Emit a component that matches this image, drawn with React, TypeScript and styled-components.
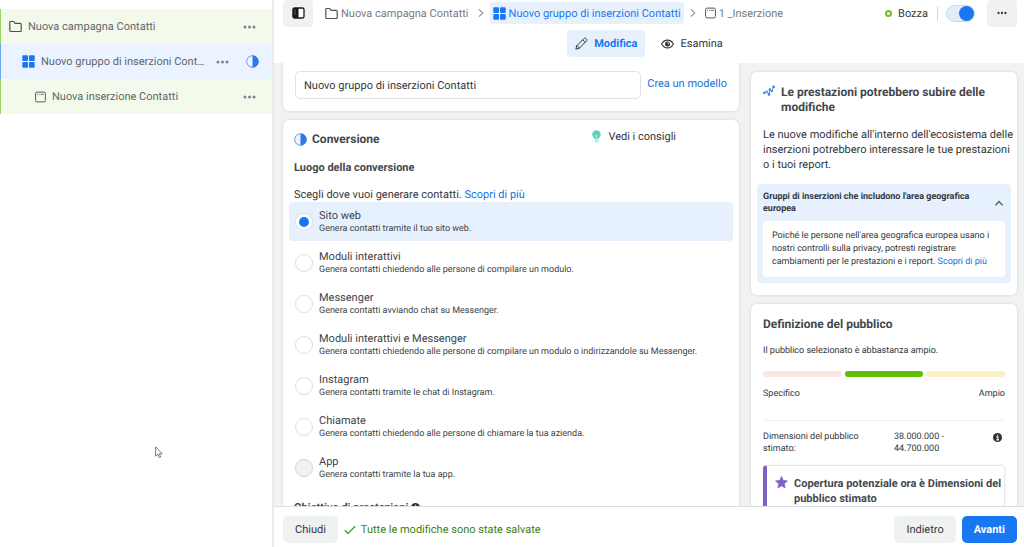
import React from "react";
import styled, { createGlobalStyle } from "styled-components";

const GlobalStyle = createGlobalStyle`
  * { box-sizing: border-box; }
  body {
    margin: 0;
    font-family: Roboto, "Liberation Sans", sans-serif;
    font-size: 11px;
    line-height: 15px;
    color: #33373b;
    background: #fff;
    text-rendering: geometricPrecision;
  }
  h2, h3, p, ul, ol, fieldset, legend, dl, dd { margin: 0; padding: 0; border: 0; list-style: none; }
  button, input { font: inherit; color: inherit; text-rendering: inherit; }
  svg { display: block; flex: none; }
`;

/* ---------- page frame ---------- */

const Page = styled.div`
  display: flex;
  height: 100vh;
  overflow: hidden;
`;

const Sidebar = styled.nav`
  flex: 0 0 274px;
  min-width: 0;
  padding-top: 9px;
  border-right: 2px solid #eaecec;
`;

const Main = styled.div`
  flex: 1;
  min-width: 0;
  display: flex;
  flex-direction: column;
`;

const Scroller = styled.main`
  flex: 1;
  min-height: 0;
  overflow: hidden;
  display: flex;
  align-items: flex-start;
  gap: 12px;
  padding: 0 7px 0 9px;
  background: #f1f3f3;
`;

const FormColumn = styled.div`
  flex: 1;
  min-width: 0;
`;

const InfoColumn = styled.aside`
  flex: 0 0 266px;
  padding-top: 9px;
  display: flex;
  flex-direction: column;
  gap: 9px;
`;

const Card = styled.section`
  background: #fff;
  border-radius: 6px;
  box-shadow: 0 0 3px rgba(0, 0, 0, 0.14);
`;

/* ---------- campaign tree ---------- */

const TreeRow = styled.li<{ $depth: number; $active?: boolean }>`
  display: flex;
  align-items: center;
  gap: 6px;
  height: 35px;
  padding: 0 13px 0 ${(p) => 8 + p.$depth * 13}px;
  border-left: 1px solid ${(p) => (p.$active ? "#6ea6f5" : "#98d65f")};
  background: ${(p) => (p.$active ? "#eaf3ff" : "#f4faeb")};
`;

const TreeLink = styled.a`
  flex: 1;
  min-width: 0;
  overflow: hidden;
  white-space: nowrap;
  text-overflow: ellipsis;
  color: #5f666d;
  text-decoration: none;
`;

const DotsButton = styled.button`
  display: flex;
  padding: 4px 3px;
  border: 0;
  background: none;
  color: #7d848b;
`;

const StatusSlot = styled.span`
  margin-left: 8px;
`;

/* ---------- header ---------- */

const Header = styled.header`
  height: 63px;
  background: #fff;
`;

const CrumbBar = styled.div`
  display: flex;
  align-items: center;
  height: 26px;
  padding: 0 7px 0 9px;
`;

const IconButton = styled.button`
  display: flex;
  align-items: center;
  justify-content: center;
  width: 30px;
  height: 27px;
  padding: 0;
  border: 0;
  border-radius: 4px;
  background: #f0f1f1;
  color: #33373b;
`;

const Crumbs = styled.ol`
  flex: 1;
  display: flex;
  align-items: center;
  gap: 5px;
  margin-left: 9px;
`;

const Crumb = styled.a<{ $active?: boolean }>`
  display: flex;
  align-items: center;
  gap: 3px;
  height: 22px;
  padding: 0 3px;
  border-radius: 3px;
  white-space: nowrap;
  text-decoration: none;
  color: ${(p) => (p.$active ? "#1877f2" : "#777c81")};
  background: ${(p) => (p.$active ? "#e7f1fe" : "transparent")};
`;

const DraftState = styled.span`
  display: flex;
  align-items: center;
  gap: 6px;
  padding-right: 9px;
  margin-right: 8px;
  border-right: 1px solid #d5d8da;
`;

const DraftDot = styled.span`
  width: 7px;
  height: 7px;
  border: 2px solid #6cc21d;
  border-radius: 50%;
`;

const Switch = styled.input`
  appearance: none;
  display: flex;
  justify-content: flex-end;
  width: 29px;
  height: 17px;
  margin: 0 12px 0 0;
  border: 1px solid #c5d8ee;
  border-radius: 9px;
  background: #e1edfb;
  &::before {
    content: "";
    width: 15px;
    height: 15px;
    border-radius: 50%;
    background: #1877f2;
  }
`;

const TabBar = styled.div`
  display: flex;
  justify-content: center;
  gap: 8px;
  padding-top: 4px;
`;

const Tab = styled.button<{ $active?: boolean }>`
  display: flex;
  align-items: center;
  gap: 6px;
  height: 27px;
  padding: 0 8px;
  border: 0;
  border-radius: 4px;
  font-weight: ${(p) => (p.$active ? 700 : 400)};
  color: ${(p) => (p.$active ? "#1877f2" : "#33373b")};
  background: ${(p) => (p.$active ? "#e7f1fe" : "transparent")};
`;

/* ---------- form cards ---------- */

const NameCard = styled(Card)`
  display: flex;
  gap: 6px;
  height: 48px;
  padding: 8px 12px 0;
  margin-bottom: 9px;
  border-radius: 0 0 6px 6px;
`;

const NameInput = styled.input`
  flex: 1;
  min-width: 0;
  height: 28px;
  padding: 0 8px;
  border: 1px solid #dfe2e4;
  border-radius: 5px;
  background: #fff;
`;

const Link = styled.a`
  color: #216fdb;
  text-decoration: none;
`;

const TemplateLink = styled(Link)`
  padding-top: 5px;
`;

const ConversionCard = styled(Card)`
  padding: 9px 6px 12px;
`;

const ConversionHead = styled.div`
  display: flex;
  justify-content: space-between;
  align-items: flex-start;
  padding: 0 57px 0 5px;
`;

const Heading = styled.h2`
  display: flex;
  align-items: center;
  gap: 5px;
  font-size: 12px;
  line-height: 20px;
  font-weight: 700;
  color: #43474b;
`;

const TipsButton = styled.button`
  display: flex;
  align-items: center;
  gap: 7px;
  padding: 0;
  border: 0;
  background: none;
`;

const SubHeading = styled.h3`
  display: flex;
  align-items: center;
  gap: 3px;
  padding: 0 5px;
  margin-top: 11px;
  font-size: 11px;
  line-height: 15px;
  font-weight: 700;
  color: #43474b;
`;

const Intro = styled.p`
  padding: 0 5px;
  margin-top: 12px;
`;

const Options = styled.div`
  display: flex;
  flex-direction: column;
  gap: 2px;
  padding-bottom: 2px;
`;

const Option = styled.label<{ $selected?: boolean }>`
  display: flex;
  align-items: center;
  gap: 6px;
  height: 39px;
  padding: 0 6px;
  border-radius: 4px;
  background: ${(p) => (p.$selected ? "#e7f1fe" : "transparent")};
`;

const Radio = styled.input`
  appearance: none;
  display: flex;
  align-items: center;
  justify-content: center;
  flex: none;
  width: 18px;
  height: 18px;
  margin: 0;
  border: 1px solid #dcdfe1;
  border-radius: 50%;
  background: #fff;
  &:checked::before {
    content: "";
    width: 10px;
    height: 10px;
    border-radius: 50%;
    background: #1877f2;
  }
  &:disabled {
    background: #f1f1f1;
    border-color: #d3d5d7;
  }
`;

const OptionText = styled.span`
  display: flex;
  flex-direction: column;
  padding-top: 2px;
  line-height: 14px;
  color: #404448;
`;

const Small = styled.span`
  font-size: 9px;
  line-height: 13px;
`;

/* ---------- info cards ---------- */

const NoticeCard = styled(Card)`
  padding: 13px 6px 12px;
`;

const NoticeTitle = styled.h2`
  display: flex;
  gap: 6px;
  padding: 0 6px;
  font-size: 12px;
  line-height: 15px;
  font-weight: 700;
  color: #43474b;
`;

/* runs up to the card's edge so that the long words keep to three lines */
const NoticeText = styled.p`
  padding: 0 0 0 6px;
  margin: 12px -6px 12px 0;
  padding-right: 3px;
`;

const RegionBox = styled.div`
  padding: 7px 6px 6px;
  border-radius: 4px;
  background: #e7f1fe;
`;

const RegionToggle = styled.button`
  display: flex;
  align-items: center;
  justify-content: space-between;
  width: 100%;
  padding: 0 2px 0 0;
  border: 0;
  background: none;
  text-align: left;
  font-size: 9px;
  line-height: 12px;
  font-weight: 700;
`;

const RegionTitle = styled.span`
  width: 218px;
`;

const RegionBody = styled.p`
  margin-top: 6px;
  padding: 9px 9px 8px;
  border-radius: 4px;
  background: #fff;
  font-size: 9px;
  line-height: 13px;
`;

const AudienceCard = styled(Card)`
  padding: 10px 12px 12px;
`;

const AudienceText = styled.p`
  margin: 11px 0 14px;
  font-size: 9px;
  line-height: 12px;
`;

const Gauge = styled.div`
  display: flex;
  gap: 3px;
`;

const GaugePart = styled.span<{ $color: string }>`
  flex: 1;
  height: 6px;
  border-radius: 3px;
  background: ${(p) => p.$color};
`;

const GaugeLabels = styled.div`
  display: flex;
  justify-content: space-between;
  margin-top: 11px;
  padding-bottom: 20px;
  border-bottom: 1px solid #eef0f1;
  font-size: 9px;
  line-height: 12px;
`;

const SizeList = styled.dl`
  display: flex;
  align-items: flex-start;
  margin: 10px 0;
  font-size: 9px;
  line-height: 12px;
`;

const SizeLabel = styled.dt`
  width: 131px;
  padding-right: 28px;
`;

const SizeValue = styled.dd`
  flex: 1;
  padding-right: 36px;
`;

const SizeInfo = styled.dd`
  padding: 2px 3px 0 0;
`;

const Callout = styled.div`
  display: flex;
  gap: 6px;
  height: 90px;
  padding: 10px 0 10px 8px;
  border: 1px solid #e6e8ea;
  border-left: 4px solid #7e62c4;
  border-radius: 4px;
  box-shadow: 0 0 3px rgba(0, 0, 0, 0.08);
`;

const CalloutTitle = styled.h3`
  font-size: 11px;
  line-height: 15px;
  font-weight: 700;
  color: #43474b;
`;

/* ---------- footer ---------- */

const Footer = styled.footer`
  display: flex;
  align-items: center;
  gap: 6px;
  height: 41px;
  padding: 5px 7px 0 9px;
  border-top: 1px solid #dcdfe1;
  background: #fff;
`;

const Button = styled.button<{ $primary?: boolean }>`
  height: 27px;
  padding: 0 12px;
  border: 0;
  border-radius: 5px;
  font-weight: ${(p) => (p.$primary ? 700 : 400)};
  color: ${(p) => (p.$primary ? "#fff" : "#33373b")};
  background: ${(p) => (p.$primary ? "#1877f2" : "#f0f1f1")};
`;

const SavedState = styled.p`
  flex: 1;
  display: flex;
  align-items: center;
  gap: 5px;
  color: #3c8010;
`;

const Pointer = styled.div`
  position: absolute;
  left: 155px;
  top: 446px;
  pointer-events: none;
`;

/* ---------- icons ---------- */

const FolderIcon = () => (
  <svg width="13" height="13" viewBox="0 0 13 13" fill="none" stroke="#4b5055" strokeWidth="1.2" strokeLinejoin="round">
    <path d="M.8 10.600V2.400c0-.5.4-.9.9-.9h2.700c.3 0 .5.1.7.4l.9 1.400h5.300c.5 0 .9.4.9.9v6.400c0 .5-.4.9-.9.9H1.700c-.5 0-.9-.4-.9-.9Z" />
  </svg>
);

const GridIcon = () => (
  <svg width="13" height="13" viewBox="0 0 13 13" fill="#1877f2">
    <rect x="0.300" y="0.300" width="5.700" height="5.700" rx="1" />
    <rect x="7" y="0.300" width="5.700" height="5.700" rx="1" />
    <rect x="0.300" y="7" width="5.700" height="5.700" rx="1" />
    <rect x="7" y="7" width="5.700" height="5.700" rx="1" />
  </svg>
);

const AdIcon = () => (
  <svg width="11" height="12" viewBox="0 0 11 12" fill="none" stroke="#555a5f">
    <rect x=".6" y="1.100" width="9.800" height="9.800" rx="1.300" />
    <path d="M2.200 3.300h1M4.300 3.300h1M5.800 3.300h3" strokeWidth=".9" />
  </svg>
);

const HalfIcon = () => (
  <svg width="13" height="13" viewBox="0 0 13 13">
    <circle cx="6.500" cy="6.500" r="5.800" fill="#eef5ff" stroke="#5b97f0" />
    <path d="M6.500.4a6.100 6.100 0 0 1 0 12.200Z" fill="#2f78ea" />
  </svg>
);

const DotsIcon = ({ width = 13 }: { width?: number }) => (
  <svg width={width} height="4" viewBox="0 0 13 4" fill="currentColor">
    <circle cx="2" cy="2" r="1.500" />
    <circle cx="6.500" cy="2" r="1.500" />
    <circle cx="11" cy="2" r="1.500" />
  </svg>
);

const PanelIcon = () => (
  <svg width="13" height="12" viewBox="0 0 13 12">
    <rect x="1" y="1" width="11" height="10" rx="1.500" fill="#fff" stroke="#16181a" strokeWidth="1.300" />
    <path d="M2 1h4.500v10H2a1.200 1.200 0 0 1-1.200-1.200V2.200A1.200 1.200 0 0 1 2 1Z" fill="#16181a" />
    <path d="M2.300 3.300h1.400M2.300 5.200h1.400M2.300 7.100h1.400" stroke="#9ea2a6" strokeWidth=".7" />
  </svg>
);

const ChevronIcon = ({ up }: { up?: boolean }) => (
  <svg width="8" height="10" viewBox="0 0 8 10" fill="none" stroke={up ? "#5b6065" : "#8b9095"} strokeWidth={up ? 1.4 : 1.1}>
    <path d={up ? "M.5 7.200 4 3.500l3.500 3.700" : "M2 1.300 5.800 5 2 8.700"} />
  </svg>
);

const PencilIcon = () => (
  <svg width="13" height="13" viewBox="0 0 13 13" fill="none" stroke="#33373b" strokeLinejoin="round">
    <path d="M.9 12.100l.8-3.300 7.200-7.200c.6-.6 1.500-.6 2.100 0l.4.4c.6.6.6 1.500 0 2.100l-7.200 7.200ZM7.700 2.800l2.500 2.500M1.700 8.800c1.200.2 2.200 1.200 2.500 2.500" />
  </svg>
);

const EyeIcon = () => (
  <svg width="13" height="10" viewBox="0 0 13 10" fill="none" stroke="#33373b">
    <path d="M.6 5C2 2.400 4.100 1.100 6.500 1.100S11 2.400 12.400 5C11 7.600 8.900 8.900 6.500 8.900S2 7.600.6 5Z" strokeWidth="1.100" />
    <circle cx="6.500" cy="5" r="2.500" fill="#33373b" stroke="none" />
    <circle cx="7.300" cy="4.200" r=".8" fill="#fff" stroke="none" />
  </svg>
);

const BulbIcon = () => (
  <svg width="9" height="13" viewBox="0 0 9 13">
    <path d="M4.500.3a4.200 4.200 0 0 0-2.600 7.500c.4.300.6.800.6 1.200h4c0-.4.200-.9.600-1.200A4.200 4.200 0 0 0 4.500.3Z" fill="#63d0b9" />
    <path d="M3.200 5l1.300 1 1.300-1M4.500 6v3" stroke="#c9f3ea" strokeWidth=".8" fill="none" />
    <rect x="2.500" y="9.300" width="4" height="3.200" rx="1" fill="#b5ecdf" />
  </svg>
);

const TrendIcon = () => (
  <svg width="12" height="12" viewBox="0 0 12 12" fill="#2f7df0" stroke="#2f7df0">
    <path d="M1.200 8 3.600 6.600 6 9.600 6.900 4.400 8.900 6.200 10.600 2" fill="none" strokeWidth=".9" />
    <g stroke="none">
      <circle cx="1.300" cy="7.900" r="1.200" />
      <circle cx="3.700" cy="6.500" r="1" />
      <circle cx="6" cy="9.500" r="1.300" />
      <circle cx="6.900" cy="4.400" r="1.200" />
      <circle cx="8.900" cy="6.300" r="1" />
      <circle cx="10.600" cy="1.900" r="1.300" />
    </g>
  </svg>
);

const InfoIcon = () => (
  <svg width="9" height="9" viewBox="0 0 9 9">
    <circle cx="4.500" cy="4.500" r="4.500" fill="#2f3337" />
    <path d="M3.400 3.900h1.500v2.900M3.300 6.900h2.600M4.600 1.700v1.100" stroke="#fff" strokeWidth="1.100" fill="none" />
  </svg>
);

const StarIcon = () => (
  <svg width="13" height="13" viewBox="0 0 13 13">
    <path d="M6.500.6l1.700 3.900 4.200.4-3.200 2.800.9 4.200-3.600-2.200-3.600 2.200.9-4.200L.6 4.900l4.200-.4Z" fill="#7e62c4" stroke="#7e62c4" strokeWidth=".8" strokeLinejoin="round" />
  </svg>
);

const CheckIcon = () => (
  <svg width="12" height="10" viewBox="0 0 12 10" fill="none" stroke="#3fa52a" strokeWidth="1.300">
    <path d="M.8 5.200 4 8.500 11.200 1.200" />
  </svg>
);

const PointerIcon = () => (
  <svg width="9" height="13" viewBox="0 0 9 13">
    <path d="M.6.800v9.400l2.200-1.900 1.400 3.300 1.500-.7-1.400-3.100h2.900Z" fill="#fff" stroke="#55575c" strokeWidth=".8" />
  </svg>
);

/* ---------- content ---------- */

const options = [
  { title: "Sito web", text: "Genera contatti tramite il tuo sito web." },
  { title: "Moduli interattivi", text: "Genera contatti chiedendo alle persone di compilare un modulo." },
  { title: "Messenger", text: "Genera contatti avviando chat su Messenger." },
  {
    title: "Moduli interattivi e Messenger",
    text: "Genera contatti chiedendo alle persone di compilare un modulo o indirizzandole su Messenger.",
  },
  { title: "Instagram", text: "Genera contatti tramite le chat di Instagram." },
  { title: "Chiamate", text: "Genera contatti chiedendo alle persone di chiamare la tua azienda." },
  { title: "App", text: "Genera contatti tramite la tua app.", disabled: true },
];

export default function App() {
  const [selected, setSelected] = React.useState(0);

  return (
    <Page>
      <GlobalStyle />
      <Sidebar aria-label="Campagna">
        <ul>
          <TreeRow $depth={0}>
            <FolderIcon />
            <TreeLink href="#campagna">Nuova campagna Contatti</TreeLink>
            <DotsButton aria-label="Altre opzioni"><DotsIcon /></DotsButton>
          </TreeRow>
          <TreeRow $depth={1} $active>
            <GridIcon />
            <TreeLink href="#gruppo">Nuovo gruppo di inserzioni Contatti</TreeLink>
            <DotsButton aria-label="Altre opzioni"><DotsIcon /></DotsButton>
            <StatusSlot><HalfIcon /></StatusSlot>
          </TreeRow>
          <TreeRow $depth={2}>
            <AdIcon />
            <TreeLink href="#inserzione">Nuova inserzione Contatti</TreeLink>
            <DotsButton aria-label="Altre opzioni"><DotsIcon /></DotsButton>
          </TreeRow>
        </ul>
      </Sidebar>

      <Main>
        <Header>
          <CrumbBar>
            <IconButton aria-label="Pannello laterale"><PanelIcon /></IconButton>
            <Crumbs>
              <li><Crumb href="#campagna"><FolderIcon />Nuova campagna Contatti</Crumb></li>
              <li aria-hidden="true"><ChevronIcon /></li>
              <li><Crumb href="#gruppo" $active><GridIcon />Nuovo gruppo di inserzioni Contatti</Crumb></li>
              <li aria-hidden="true"><ChevronIcon /></li>
              <li><Crumb href="#inserzione"><AdIcon />1 _Inserzione</Crumb></li>
            </Crumbs>
            <DraftState><DraftDot />Bozza</DraftState>
            <Switch type="checkbox" role="switch" defaultChecked aria-label="Attiva" />
            <IconButton aria-label="Altro"><DotsIcon width={10} /></IconButton>
          </CrumbBar>
          <TabBar>
            <Tab $active><PencilIcon />Modifica</Tab>
            <Tab><EyeIcon />Esamina</Tab>
          </TabBar>
        </Header>

        <Scroller>
          <FormColumn>
            <NameCard>
              <NameInput aria-label="Nome del gruppo di inserzioni" defaultValue="Nuovo gruppo di inserzioni Contatti" />
              <TemplateLink href="#modello">Crea un modello</TemplateLink>
            </NameCard>
            <ConversionCard>
              <ConversionHead>
                <Heading><HalfIcon />Conversione</Heading>
                <TipsButton><BulbIcon />Vedi i consigli</TipsButton>
              </ConversionHead>
              <SubHeading>Luogo della conversione</SubHeading>
              <Intro>
                Scegli dove vuoi generare contatti. <Link href="#luogo">Scopri di più</Link>
              </Intro>
              <Options role="radiogroup" aria-label="Luogo della conversione">
                {options.map((o, i) => (
                  <Option key={o.title} $selected={i === selected}>
                    <Radio
                      type="radio"
                      name="luogo"
                      checked={i === selected}
                      disabled={o.disabled}
                      onChange={() => setSelected(i)}
                    />
                    <OptionText>
                      {o.title}
                      <Small>{o.text}</Small>
                    </OptionText>
                  </Option>
                ))}
              </Options>
              <SubHeading>Obiettivo di prestazioni <InfoIcon /></SubHeading>
            </ConversionCard>
          </FormColumn>

          <InfoColumn>
            <NoticeCard>
              <NoticeTitle><TrendIcon />Le prestazioni potrebbero subire delle modifiche</NoticeTitle>
              <NoticeText>
                Le nuove modifiche all'interno dell'ecosistema delle inserzioni potrebbero interessare le tue
                prestazioni o i tuoi report.
              </NoticeText>
              <RegionBox>
                <RegionToggle aria-expanded="true">
                  <RegionTitle>Gruppi di inserzioni che includono l'area geografica europea</RegionTitle>
                  <ChevronIcon up />
                </RegionToggle>
                <RegionBody>
                  Poiché le persone nell'area geografica europea usano i nostri controlli sulla privacy, potresti
                  registrare cambiamenti per le prestazioni e i report. <Link href="#privacy">Scopri di più</Link>
                </RegionBody>
              </RegionBox>
            </NoticeCard>

            <AudienceCard>
              <Heading>Definizione del pubblico</Heading>
              <AudienceText>Il pubblico selezionato è abbastanza ampio.</AudienceText>
              <Gauge>
                <GaugePart $color="#fde7e5" />
                <GaugePart $color="#5fbf00" />
                <GaugePart $color="#fdeec4" />
              </Gauge>
              <GaugeLabels><span>Specifico</span><span>Ampio</span></GaugeLabels>
              <SizeList>
                <SizeLabel>Dimensioni del pubblico stimato:</SizeLabel>
                <SizeValue>38.000.000 - 44.700.000</SizeValue>
                <SizeInfo><InfoIcon /></SizeInfo>
              </SizeList>
              <Callout>
                <StarIcon />
                <CalloutTitle>Copertura potenziale ora è Dimensioni del pubblico stimato</CalloutTitle>
              </Callout>
            </AudienceCard>
          </InfoColumn>
        </Scroller>

        <Footer>
          <Button>Chiudi</Button>
          <SavedState><CheckIcon />Tutte le modifiche sono state salvate</SavedState>
          <Button>Indietro</Button>
          <Button $primary>Avanti</Button>
        </Footer>
      </Main>
      <Pointer><PointerIcon /></Pointer>
    </Page>
  );
}
